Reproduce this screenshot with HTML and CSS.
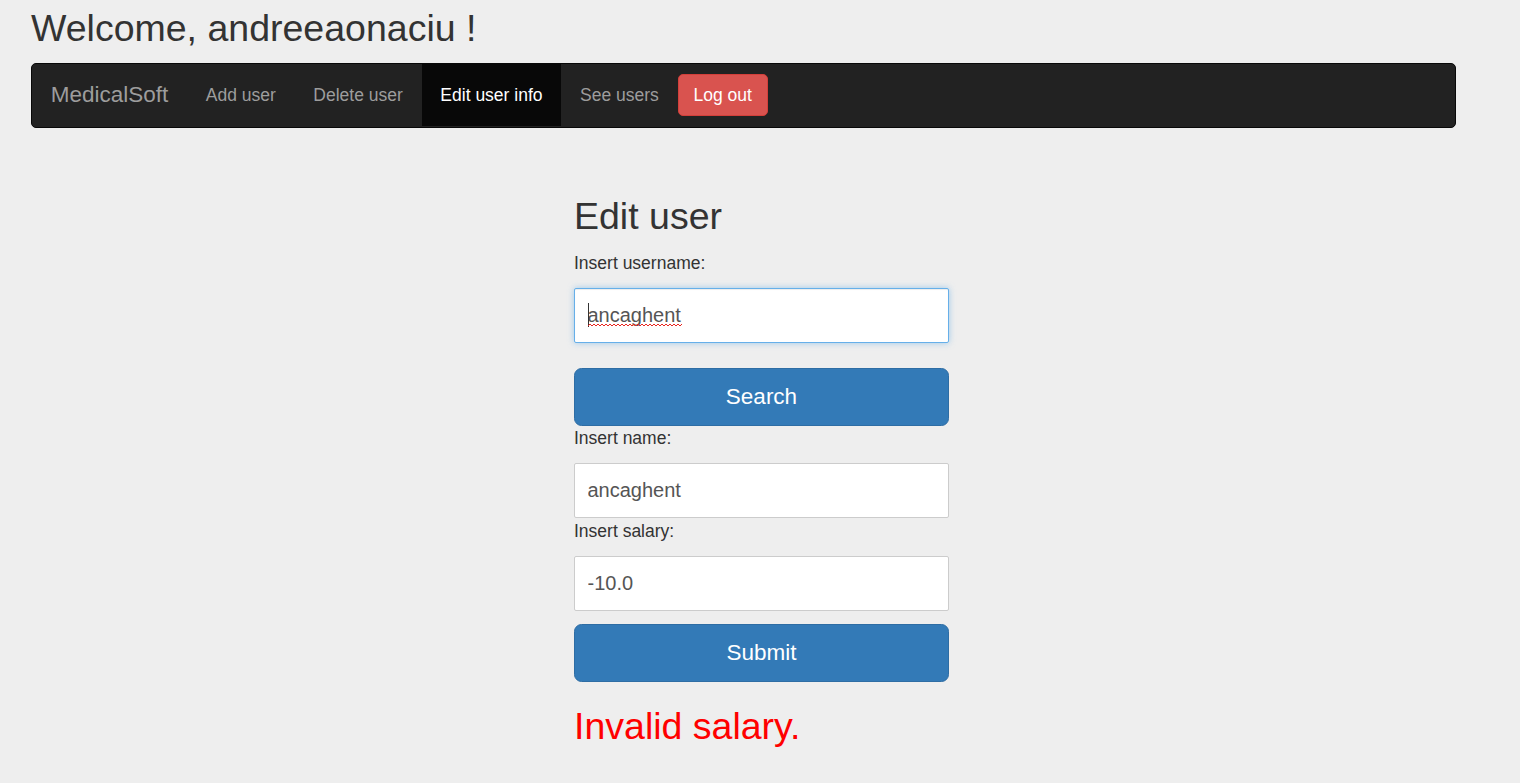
FILE: index.html
```html
<!DOCTYPE html>
<html lang="en">
<head>
<meta charset="utf-8">
<title>MedicalSoft - Edit user</title>
<link rel="stylesheet" href="styles.css">
</head>
<body>
<div class="page">
  <h1 class="welcome">Welcome, andreeaonaciu !</h1>
  <nav class="navbar">
    <a class="brand" href="#">MedicalSoft</a>
    <a class="nav-link" href="#">Add user</a>
    <a class="nav-link" href="#">Delete user</a>
    <a class="nav-link active" href="#">Edit user info</a>
    <a class="nav-link" href="#">See users</a>
    <div class="nav-btn-wrap"><button class="btn-danger" type="button">Log out</button></div>
  </nav>
</div>
<main class="main">
  <form class="edit-form">
    <h2 class="form-title">Edit user</h2>
    <label class="label label-first" for="username">Insert username:</label>
    <div class="input-wrap">
      <input id="username" class="input input-focus" type="text" value="ancaghent" spellcheck="false">
      <span class="caret"></span>
      <svg class="squiggle" width="94" height="4" viewBox="0 0 94 4" aria-hidden="true">
        <path d="M0 3 L2 1 L4 3 L6 1 L8 3 L10 1 L12 3 L14 1 L16 3 L18 1 L20 3 L22 1 L24 3 L26 1 L28 3 L30 1 L32 3 L34 1 L36 3 L38 1 L40 3 L42 1 L44 3 L46 1 L48 3 L50 1 L52 3 L54 1 L56 3 L58 1 L60 3 L62 1 L64 3 L66 1 L68 3 L70 1 L72 3 L74 1 L76 3 L78 1 L80 3 L82 1 L84 3 L86 1 L88 3 L90 1 L92 3 L94 1" fill="none" stroke="#e8261f" stroke-width="1"/>
      </svg>
    </div>
    <button class="btn-primary btn-search" type="button">Search</button>
    <label class="label" for="name">Insert name:</label>
    <input id="name" class="input" type="text" value="ancaghent" spellcheck="false">
    <label class="label label-salary" for="salary">Insert salary:</label>
    <input id="salary" class="input" type="text" value="-10.0" spellcheck="false">
    <button class="btn-primary btn-submit" type="button">Submit</button>
    <h2 class="error">Invalid salary.</h2>
  </form>
</main>
</body>
</html>
```
FILE: styles.css
```css
* {
  box-sizing: border-box;
}

html, body {
  margin: 0;
  padding: 0;
}

body {
  background: #eeeeee;
  font-family: "Liberation Sans", Arial, Helvetica, sans-serif;
  color: #333333;
  width: 1520px;
  min-height: 783px;
}

.page {
  padding: 8px 0 0 31px;
}

.welcome {
  margin: 0 0 13.5px 0;
  font-size: 37.5px;
  line-height: 41.25px;
  font-weight: 400;
  color: #333333;
}

.navbar {
  display: flex;
  align-items: flex-start;
  width: 1425px;
  height: 65px;
  background: #222222;
  border: 1.25px solid #080808;
  border-radius: 5px;
}

.brand {
  display: block;
  padding: 0 18.75px;
  font-size: 22.5px;
  line-height: 62.5px;
  color: #9d9d9d;
  text-decoration: none;
}

.nav-link {
  display: block;
  padding: 0 18.75px;
  font-size: 17.5px;
  line-height: 62.5px;
  color: #9d9d9d;
  text-decoration: none;
}

.nav-link.active {
  background: #080808;
  color: #ffffff;
}

.nav-btn-wrap {
  padding-top: 10px;
}

.btn-danger {
  display: block;
  height: 42.5px;
  padding: 0 15px;
  font-family: inherit;
  font-size: 17.5px;
  line-height: 25px;
  color: #ffffff;
  background: #d9534f;
  border: 1.25px solid #d43f3a;
  border-radius: 5px;
}

.main {
  display: flex;
  justify-content: center;
  padding-left: 3px;
}

.edit-form {
  width: 375px;
  display: flex;
  flex-direction: column;
  margin-top: 68px;
}

.form-title {
  margin: 0 0 13.5px 0;
  font-size: 37.5px;
  line-height: 41.25px;
  font-weight: 400;
  color: #333333;
}

.label {
  display: block;
  font-size: 17.5px;
  line-height: 25px;
  height: 25px;
  margin-bottom: 12px;
  color: #333333;
}

.label-first {
  margin-bottom: 12px;
}

.label-salary {
  margin-top: 1px;
}

.input-wrap {
  position: relative;
}

.input {
  display: block;
  width: 375px;
  height: 55px;
  padding: 0 12.5px;
  font-family: inherit;
  font-size: 20px;
  color: #555555;
  background: #ffffff;
  border: 1.25px solid #cccccc;
  border-radius: 2px;
  outline: none;
}

.input-focus {
  border-color: #66afe9;
  box-shadow: inset 0 1px 1px rgba(0, 0, 0, .075), 0 0 6px rgba(102, 175, 233, .6);
}

.caret {
  position: absolute;
  left: 14px;
  top: 15px;
  width: 1px;
  height: 24px;
  background: #333333;
}

.squiggle {
  position: absolute;
  left: 14px;
  top: 35px;
  display: block;
}

.btn-primary {
  display: block;
  width: 375px;
  height: 58px;
  padding: 0;
  font-family: inherit;
  font-size: 22.5px;
  color: #ffffff;
  background: #337ab7;
  border: 1.25px solid #2e6da4;
  border-radius: 7.5px;
}

.btn-search {
  margin-top: 25px;
}

.btn-submit {
  margin-top: 13px;
}

.error {
  margin: 24px 0 0 0;
  font-size: 37.5px;
  line-height: 41.25px;
  font-weight: 400;
  color: #ff0000;
}
```
